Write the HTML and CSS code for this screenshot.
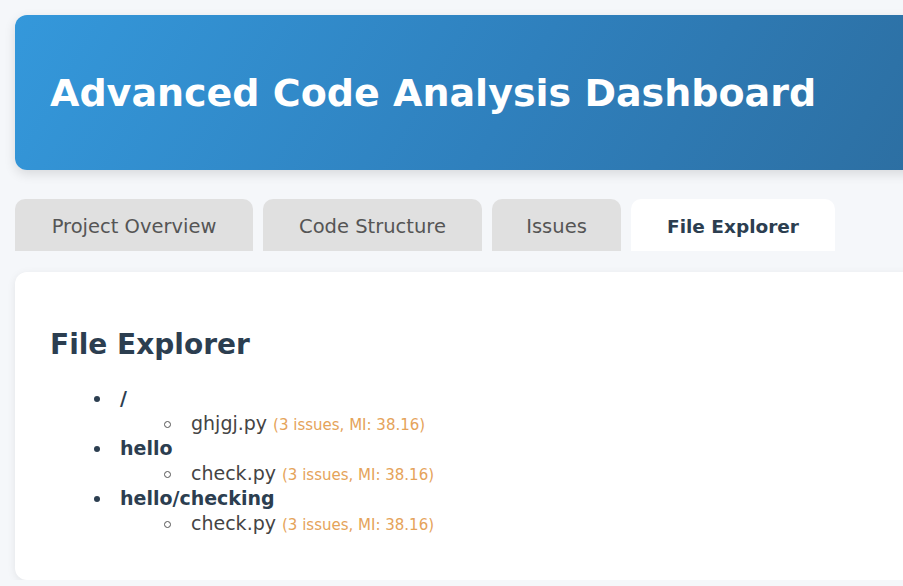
FILE: index.html
```html
<!DOCTYPE html>
<html>
<head>
<meta charset="utf-8">
<link rel="stylesheet" href="styles.css">
</head>
<body>
<div class="page">
  <header class="header">
    <h1 class="title">Advanced Code Analysis Dashboard</h1>
  </header>
  <nav class="tabs">
    <div class="tab">Project Overview</div>
    <div class="tab">Code Structure</div>
    <div class="tab">Issues</div>
    <div class="tab active">File Explorer</div>
  </nav>
  <section class="card">
    <h2 class="card-title">File Explorer</h2>
    <ul class="tree">
      <li class="dir"><span class="dir-name">/</span>
        <ul class="files">
          <li class="file">ghjgj.py <span class="meta">(3 issues, MI: 38.16)</span></li>
        </ul>
      </li>
      <li class="dir"><span class="dir-name">hello</span>
        <ul class="files">
          <li class="file">check.py <span class="meta">(3 issues, MI: 38.16)</span></li>
        </ul>
      </li>
      <li class="dir"><span class="dir-name">hello/checking</span>
        <ul class="files">
          <li class="file">check.py <span class="meta">(3 issues, MI: 38.16)</span></li>
        </ul>
      </li>
    </ul>
  </section>
</div>
</body>
</html>
```
FILE: styles.css
```css
html, body {
  margin: 0;
  padding: 0;
  background: #f5f7fa;
  font-family: "DejaVu Sans", "Open Sans", sans-serif;
  color: #2c3e50;
  overflow: hidden;
}
.page {
  padding: 15px 0 0 15px;
  width: 1000px;
}
.header {
  height: 155px;
  border-radius: 12px;
  background: linear-gradient(120deg, #3498db 0%, #2f80bd 50%, #2c6b9c 100%);
  box-shadow: 0 4px 12px rgba(0,0,0,0.12);
  display: flex;
  align-items: center;
  padding-left: 35px;
}
.title {
  margin: 0;
  color: #fff;
  font-size: 38px;
  font-weight: 700;
  line-height: 1.2;
  padding-top: 3px;
}
.tabs {
  display: flex;
  gap: 10px;
  margin-top: 29px;
}
.tab {
  height: 52px;
  display: flex;
  align-items: center;
  justify-content: center;
  background: #e0e0e0;
  border-radius: 10px 10px 0 0;
  font-size: 19.5px;
  color: #555;
  padding-top: 2px;
  box-sizing: border-box;
}
.tab:nth-child(1) { width: 238px; }
.tab:nth-child(2) { width: 219px; }
.tab:nth-child(3) { width: 129px; }
.tab.active {
  width: 204px;
  background: #fff;
  font-weight: 700;
  font-size: 18.5px;
  color: #2c3e50;
}
.card {
  margin-top: 21px;
  background: #fff;
  border-radius: 12px;
  box-shadow: 0 2px 8px rgba(0,0,0,0.08);
  height: 308px;
  padding: 55px 35px 0;
  box-sizing: border-box;
}
.card-title {
  margin: 0 0 23px;
  font-size: 28px;
  font-weight: 700;
  color: #2c3e50;
  line-height: 36px;
}
.tree {
  margin: 0;
  padding-left: 70px;
  list-style: none;
  font-size: 19px;
  line-height: 25px;
}
.dir, .file {
  position: relative;
}
.dir::before {
  content: "";
  position: absolute;
  left: -26px;
  top: 10px;
  width: 6px;
  height: 6px;
  border-radius: 50%;
  background: #2c3e50;
}
.dir-name {
  font-weight: 700;
  color: #2c3e50;
}
.files {
  margin: 0;
  padding-left: 71px;
  list-style: none;
  color: #444;
}
.file::before {
  content: "";
  position: absolute;
  left: -27px;
  top: 10px;
  width: 5px;
  height: 5px;
  border: 1px solid #555;
  border-radius: 50%;
}
.meta {
  color: #e5a35a;
  font-size: 15px;
  line-height: 1;
}
```
